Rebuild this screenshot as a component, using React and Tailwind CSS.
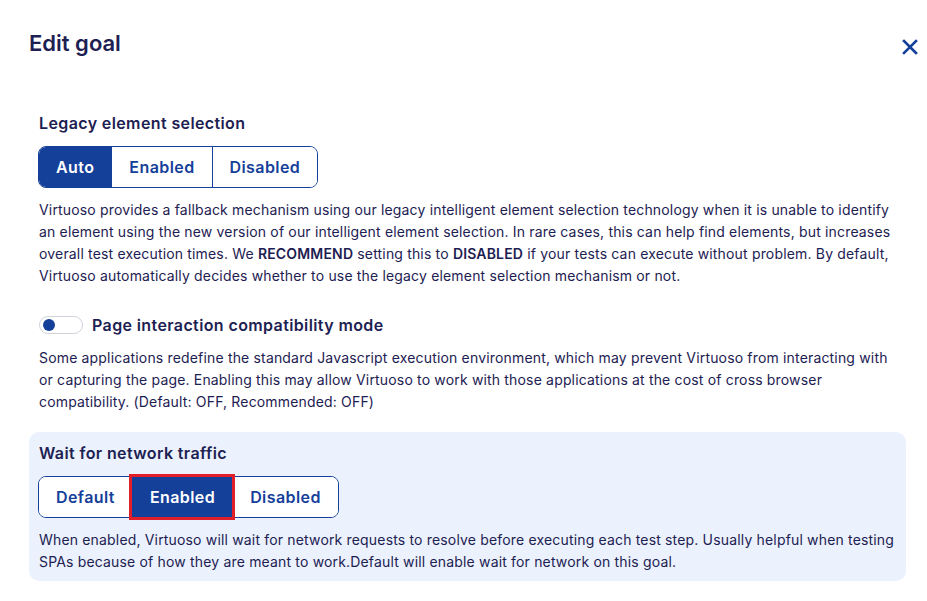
import React from 'react';

const NAVY = 'text-[#1d2152]';

function SegmentGroup({ options, selected, highlight }) {
  return (
    <div className="-ml-px flex w-fit rounded-lg border border-[#15409a] bg-white">
      {options.map((opt, i) => {
        const active = opt === selected;
        const first = i === 0;
        const last = i === options.length - 1;
        return (
          <button
            key={opt}
            className={[
              'relative h-10 px-[17px] text-base font-semibold leading-none tracking-[0.026em]',
              first ? 'rounded-l-[7px]' : 'border-l border-[#15409a]',
              last ? 'rounded-r-[7px]' : '',
              active ? 'bg-[#15409a] text-white' : 'bg-white text-[#15409a]',
              active && highlight ? 'z-10 outline-3 outline-[#e01f2b]' : '',
            ].join(' ')}
          >
            {opt}
          </button>
        );
      })}
    </div>
  );
}

export default function App() {
  return (
    <div className={`w-[927px] h-[601px] bg-white font-['Inter',sans-serif] ${NAVY}`}>
      <div className="flex items-center justify-between pl-[29px] pr-[5px] pt-[27px]">
        <h1 className="text-[22px] font-semibold leading-[30px]">Edit goal</h1>
        <button className="mt-2 flex h-6 w-6 items-center justify-center text-[#15409a]">
          <svg width="16" height="16" viewBox="0 0 16 16" fill="none">
            <path d="M2 2L14 14M14 2L2 14" stroke="currentColor" strokeWidth="2.6" strokeLinecap="square" />
          </svg>
        </button>
      </div>

      <div className="pl-[29px] pr-[21px]">
        <section className="px-[10px] pt-[52px]">
          <h2 className="text-base font-semibold leading-6 tracking-[0.024em]">Legacy element selection</h2>
          <div className="mt-[11px]">
            <SegmentGroup options={['Auto', 'Enabled', 'Disabled']} selected="Auto" />
          </div>
          <p className="mt-[11px] text-sm leading-[22px] tracking-[0.012em]">
            Virtuoso provides a fallback mechanism using our legacy intelligent element selection technology when it is unable to identify an element using the new version of our intelligent element selection. In rare cases, this can help find elements, but increases overall test execution times. We <span className="font-semibold">RECOMMEND</span> setting this to <span className="font-semibold">DISABLED</span> if your tests can execute without problem. By default, Virtuoso automatically decides whether to use the legacy element selection mechanism or not.
          </p>
        </section>

        <section className="px-[10px] pt-[26px]">
          <div className="flex h-6 items-center gap-[9px]">
            <span className="flex h-[18px] w-11 items-center rounded-full border border-[#cfd3dc] bg-white pl-[3px]">
              <span className="h-3 w-3 rounded-full bg-[#15409a]" />
            </span>
            <span className="text-base font-semibold tracking-[0.024em]">Page interaction compatibility mode</span>
          </div>
          <p className="mt-[10px] text-sm leading-[22px] tracking-[0.012em]">
            Some applications redefine the standard Javascript execution environment, which may prevent Virtuoso from interacting with or capturing the page. Enabling this may allow Virtuoso to work with those applications at the cost of cross browser compatibility. (Default: OFF, Recommended: OFF)
          </p>
        </section>

        <section className="mt-[19px] rounded-[10px] bg-[#ebf2fe] px-[10px] pt-[9px] pb-2">
          <h2 className="text-base font-semibold leading-6 tracking-[0.024em]">Wait for network traffic</h2>
          <div className="mt-[11px]">
            <SegmentGroup options={['Default', 'Enabled', 'Disabled']} selected="Enabled" highlight />
          </div>
          <p className="mt-[11px] text-sm leading-[22px] tracking-[0.012em]">
            When enabled, Virtuoso will wait for network requests to resolve before executing each test step. Usually helpful when testing SPAs because of how they are meant to work.Default will enable wait for network on this goal.
          </p>
        </section>
      </div>
    </div>
  );
}
